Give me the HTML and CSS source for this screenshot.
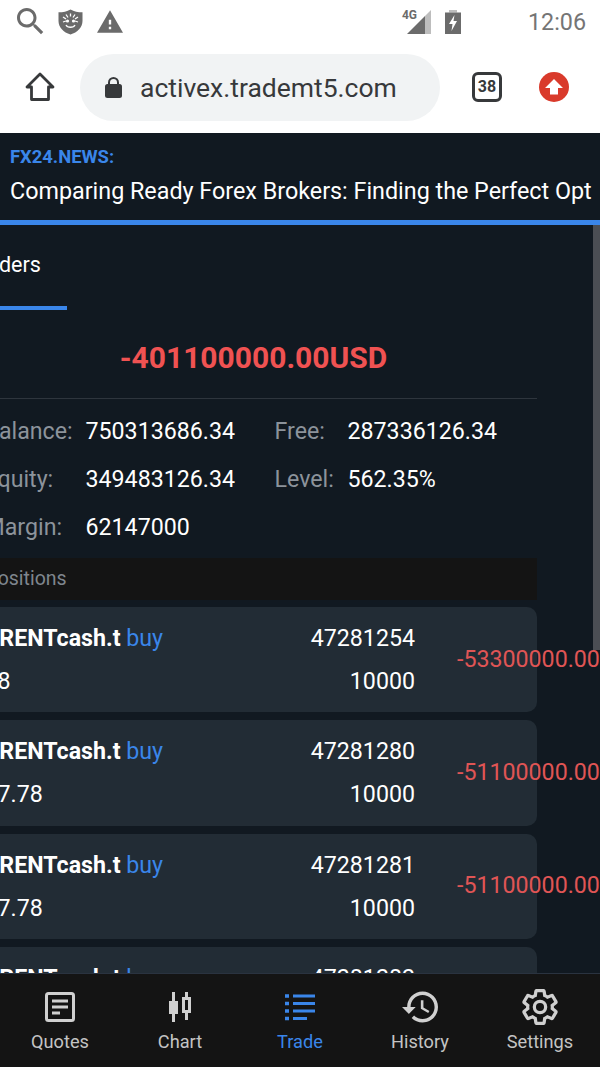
FILE: index.html
```html
<!DOCTYPE html>
<html lang="en">
<head>
  <meta charset="UTF-8" />
  <title>Trade</title>
  <link rel="stylesheet" href="styles.css">
</head>
<body>
  <div class="status-bar">
    <div class="status-left">
      <svg class="icon-search" viewBox="3 3 18 18"><path d="M15.5 14h-.79l-.28-.27C15.41 12.59 16 11.11 16 9.5 16 5.91 13.09 3 9.5 3S3 5.91 3 9.5 5.91 16 9.5 16c1.61 0 3.09-.59 4.23-1.57l.27.28v.79l5 4.99L20.49 19l-4.99-5zm-6 0C7.01 14 5 11.99 5 9.5S7.01 5 9.5 5 14 7.01 14 9.5 11.99 14 9.5 14z"/></svg>
      <svg class="icon-shield" viewBox="0 0 25 26">
        <path d="M12.5 0.5C16 2.5 20 3.3 24.5 3.3V12c0 6.5-5 11.300-12 13.500C5.500 23.300.5 18.500.5 12V3.300C5 3.300 9 2.500 12.500.5z"/>
        <path class="shield-face" d="M5 8l3 2M20 8l-3 2M8 5.500l2 3M17 5.500l-2 3M12.500 4.500v3M5 13l3-1M20 13l-3-1M8 16c1.500 3 7.500 3 9 0"/>
        <circle class="shield-eye" cx="9.500" cy="12" r="1.600"/>
        <circle class="shield-eye" cx="15.500" cy="12" r="1.600"/>
      </svg>
      <svg class="icon-warning" viewBox="1 2 22 19"><path d="M1 21h22L12 2 1 21zm12-3h-2v-2h2v2zm0-4h-2v-4h2v4z"/></svg>
    </div>
    <div class="status-right">
      <div class="signal">
        <span class="signal-label">4G</span>
        <svg class="icon-signal" viewBox="0 0 24 24"><path class="signal-empty" d="M24 0v24H18V6z"/><path d="M18 6v18H0z"/></svg>
      </div>
      <svg class="icon-battery" viewBox="0 0 16 24">
        <path class="battery-top" d="M4 0h8v2.500H4z"/>
        <path fill-rule="evenodd" d="M0 2.500h16V24H0zM9.500 5L4 14h3.500l-1 7L12 11H8.500z"/>
      </svg>
      <span class="clock">12:06</span>
    </div>
  </div>

  <div class="browser-bar">
    <svg class="icon-home" viewBox="0 0 30 30"><path d="M2 15L15 2l13 13h-4.500v12.500h-17V15z"/></svg>
    <div class="url-pill">
      <svg class="icon-lock" viewBox="0 0 17 21">
        <path class="lock-shackle" d="M4 9V5.500a4.500 4.500 0 0 1 9 0V9"/>
        <rect y="7" width="17" height="14" rx="2.500"/>
      </svg>
      <span class="url">activex.trademt5.com</span>
    </div>
    <div class="tab-count">38</div>
    <svg class="icon-update" viewBox="0 0 30 30">
      <circle cx="15" cy="15" r="15"/>
      <path d="M15 7l9 9h-5v6.500h-8V16H6z"/>
    </svg>
  </div>

  <div class="news">
    <div class="news-label">FX24.NEWS:</div>
    <div class="news-text">Comparing Ready Forex Brokers: Finding the Perfect Opt</div>
  </div>

  <main class="main">
    <div class="panel">
      <div class="tabs">
        <div class="tab">Orders</div>
      </div>
      <div class="total">-401100000.00USD</div>

      <div class="summary">
        <span class="label">Balance:</span><span>750313686.34</span><span class="label">Free:</span><span>287336126.34</span>
        <span class="label">Equity:</span><span>349483126.34</span><span class="label">Level:</span><span>562.35%</span>
        <span class="label">Margin:</span><span>62147000</span>
      </div>

      <div class="section">Positions</div>

      <div class="cards">
        <div class="card">
          <div class="card-left">
            <div><b>BRENTcash.t</b> <span class="side">buy</span></div>
            <div>78</div>
          </div>
          <div class="card-mid">
            <div>47281254</div>
            <div>10000</div>
          </div>
          <div class="pnl">-53300000.00</div>
        </div>
        <div class="card">
          <div class="card-left">
            <div><b>BRENTcash.t</b> <span class="side">buy</span></div>
            <div>77.78</div>
          </div>
          <div class="card-mid">
            <div>47281280</div>
            <div>10000</div>
          </div>
          <div class="pnl">-51100000.00</div>
        </div>
        <div class="card">
          <div class="card-left">
            <div><b>BRENTcash.t</b> <span class="side">buy</span></div>
            <div>77.78</div>
          </div>
          <div class="card-mid">
            <div>47281281</div>
            <div>10000</div>
          </div>
          <div class="pnl">-51100000.00</div>
        </div>
        <div class="card">
          <div class="card-left">
            <div><b>BRENTcash.t</b> <span class="side">buy</span></div>
            <div>77.78</div>
          </div>
          <div class="card-mid">
            <div>47281282</div>
            <div>10000</div>
          </div>
          <div class="pnl">-51100000.00</div>
        </div>
      </div>
    </div>
    <div class="scrollbar"></div>
  </main>

  <nav class="nav">
    <div class="nav-item">
      <svg viewBox="0 0 30 30"><rect x="1.500" y="1.500" width="27" height="27" rx="2"/><path d="M7 9h16M7 15h16M7 21h8"/></svg>
      <span>Quotes</span>
    </div>
    <div class="nav-item">
      <svg viewBox="0 0 30 30">
        <path class="filled" d="M4 9h3V0h3v9h3v13h-3v8H7v-8H4z"/>
        <path class="filled" fill-rule="evenodd" d="M17 5h3V0h3v5h3v16h-3v7h-3v-7h-3zM20 8v10h3V8z"/>
      </svg>
      <span>Chart</span>
    </div>
    <div class="nav-item active">
      <svg viewBox="0 0 30 30"><path class="dash" d="M0 4h4M0 11.500h4M0 19h4M0 26.500h4"/><path d="M8 4h22M8 11.500h22M8 19h22M8 26.500h14"/></svg>
      <span>Trade</span>
    </div>
    <div class="nav-item">
      <svg class="wide" viewBox="1 3 21 18"><path class="filled" d="M13 3c-4.970 0-9 4.030-9 9H1l3.890 3.890.07.14L9 12H6c0-3.870 3.130-7 7-7s7 3.130 7 7-3.130 7-7 7c-1.930 0-3.680-.79-4.940-2.060l-1.420 1.420C8.270 19.990 10.510 21 13 21c4.970 0 9-4.030 9-9s-4.030-9-9-9zm-1 5v5l4.280 2.540.72-1.210-3.500-2.080V8H12z"/></svg>
      <span>History</span>
    </div>
    <div class="nav-item">
      <svg class="wide" viewBox="2 1.500 20 21"><path class="thin" d="M19.140 12.940c.04-.3.06-.61.06-.94 0-.32-.02-.64-.07-.94l2.030-1.580c.18-.14.23-.41.12-.61l-1.920-3.320c-.12-.22-.37-.29-.59-.22l-2.390.96c-.5-.38-1.030-.7-1.620-.94l-.36-2.540c-.04-.24-.24-.41-.48-.41h-3.840c-.24 0-.43.17-.47.41l-.36 2.540c-.59.24-1.130.57-1.620.94l-2.390-.96c-.22-.08-.47 0-.59.22L2.740 8.870c-.12.21-.08.47.12.61l2.030 1.580c-.05.3-.09.63-.09.94s.02.64.07.94l-2.030 1.580c-.18.14-.23.41-.12.61l1.920 3.320c.12.22.37.29.59.22l2.390-.96c.5.38 1.030.7 1.620.94l.36 2.540c.05.24.24.41.48.41h3.840c.24 0 .44-.17.47-.41l.36-2.540c.59-.24 1.130-.56 1.620-.94l2.390.96c.22.08.47 0 .59-.22l1.920-3.320c.12-.22.07-.47-.12-.61l-2.010-1.580z"/><circle class="thin" cx="12" cy="12" r="3.300"/></svg>
      <span>Settings</span>
    </div>
  </nav>
</body>
</html>
```

FILE: styles.css
```css
:root {
  --bg: #111921;
  --card: #222c35;
  --bar: #141414;
  --blue: #3a86ea;
  --red: #e05555;
  --label: #8c939b;
  --nav-text: #c4c4c4;
  --status: #6b6b6b;
}

html, body {
  margin: 0;
  padding: 0;
  height: 100%;
}

body {
  display: flex;
  flex-direction: column;
  width: 600px;
  height: 1067px;
  overflow: hidden;
  background: var(--bg);
  color: #fff;
  font-family: Roboto, sans-serif;
  font-size: 23.200px;
}

/* status bar */
.status-bar {
  display: flex;
  flex: none;
  align-items: center;
  justify-content: space-between;
  height: 43px;
  background: #fff;
}

.status-left {
  display: flex;
  align-items: center;
  padding-left: 17px;
  fill: var(--status);
}

.icon-search {
  width: 27px;
  height: 27px;
}

.icon-shield {
  width: 25px;
  height: 26px;
  margin-left: 14px;
}

.shield-face {
  fill: none;
  stroke: #fff;
  stroke-width: 1.3;
}

.shield-eye {
  fill: #fff;
}

.icon-warning {
  width: 26px;
  height: 23px;
  margin-left: 14px;
}

.status-right {
  display: flex;
  align-items: center;
  padding-right: 14px;
  fill: var(--status);
}

.signal {
  position: relative;
  width: 24px;
  height: 24px;
}

.signal-label {
  position: absolute;
  top: -2px;
  left: -5px;
  font-size: 12px;
  font-weight: 700;
  color: var(--status);
}

.icon-signal {
  display: block;
  width: 24px;
  height: 24px;
}

.signal-empty {
  fill: #bdbdbd;
}

.icon-battery {
  width: 16px;
  height: 24px;
  margin-left: 14px;
}

.battery-top {
  fill: #bdbdbd;
}

.clock {
  margin-left: 67px;
  font-size: 23.300px;
  color: #757575;
}

/* browser toolbar */
.browser-bar {
  display: flex;
  flex: none;
  box-sizing: border-box;
  align-items: center;
  height: 90px;
  padding: 0 0 2px 25px;
  background: #fff;
  color: #37393b;
}

.icon-home {
  flex: none;
  width: 30px;
  height: 30px;
  fill: none;
  stroke: #37393b;
  stroke-width: 2.800;
  stroke-linejoin: round;
}

.url-pill {
  display: flex;
  align-items: center;
  flex: none;
  width: 335px;
  height: 67px;
  margin-left: 25px;
  padding-left: 25px;
  border-radius: 34px;
  background: #f1f3f4;
}

.icon-lock {
  flex: none;
  width: 17px;
  height: 21px;
  fill: #37393b;
}

.lock-shackle {
  fill: none;
  stroke: #37393b;
  stroke-width: 2;
}

.url {
  margin-left: 18px;
  font-size: 26.500px;
}

.tab-count {
  flex: none;
  width: 24px;
  height: 24px;
  margin-left: 32px;
  border: 3px solid #37393b;
  border-radius: 6px;
  font-size: 16px;
  font-weight: 700;
  line-height: 24px;
  text-align: center;
}

.icon-update {
  flex: none;
  width: 30px;
  height: 30px;
  margin-left: 37px;
  fill: #d93a2b;
}

.icon-update path {
  fill: #fff;
}

/* news strip */
.news {
  flex: none;
  box-sizing: border-box;
  height: 92px;
  padding: 13px 0 0 10px;
  border-bottom: 5px solid var(--blue);
  overflow: hidden;
}

.news-label {
  color: var(--blue);
  font-size: 18.400px;
  font-weight: 700;
  line-height: 22px;
}

.news-text {
  margin-top: 9px;
  font-size: 23.320px;
  line-height: 28px;
  white-space: nowrap;
}

/* main area, scrolled sideways so the left edge is cut */
.main {
  position: relative;
  flex: 1;
  min-height: 0;
  overflow: hidden;
}

.scrollbar {
  position: absolute;
  top: 0;
  right: 0;
  width: 7px;
  height: 425px;
  background: #4b4e54;
}

.panel {
  width: 567px;
  margin-left: -30px;
}

.tabs {
  display: flex;
  height: 85px;
}

.tab {
  box-sizing: border-box;
  width: 97px;
  padding: 26px 0 0 7px;
  border-bottom: 4px solid var(--blue);
  font-size: 21.500px;
  line-height: 28px;
}

.total {
  box-sizing: border-box;
  height: 89px;
  border-bottom: 1px solid #2e353d;
  color: #f05252;
  font-size: 30px;
  font-weight: 700;
  line-height: 96px;
  text-align: center;
}

.summary {
  display: grid;
  grid-template-columns: 101px 189px 73px auto;
  grid-auto-rows: 48px;
  align-items: center;
  padding: 8px 0 0 14.500px;
}

.label {
  color: var(--label);
}

.section {
  height: 42px;
  margin-top: 7px;
  padding-left: 15.500px;
  background: var(--bar);
  color: #7f868e;
  font-size: 19.500px;
  line-height: 42px;
}

.cards {
  display: flex;
  flex-direction: column;
  gap: 8px;
  margin-top: 7px;
}

.card {
  display: grid;
  grid-template-columns: 1fr auto 80px;
  align-items: center;
  height: 105.300px;
  padding-left: 14.500px;
  border-radius: 10px;
  background: var(--card);
}

.card-left,
.card-mid {
  display: flex;
  flex-direction: column;
  gap: 15px;
  line-height: 28px;
}

.card-left b {
  font-weight: 700;
}

.card-mid {
  margin-right: 42px;
  text-align: right;
}

.side {
  color: var(--blue);
}

.pnl {
  margin-bottom: 2px;
  color: var(--red);
  white-space: nowrap;
}

/* bottom navigation */
.nav {
  display: flex;
  flex: none;
  box-sizing: border-box;
  height: 94px;
  border-top: 1px solid #2a3340;
  background: var(--bar);
  position: relative;
}

.nav-item {
  display: flex;
  flex: 1;
  flex-direction: column;
  align-items: center;
  padding-top: 18px;
  color: var(--nav-text);
  font-size: 18.200px;
}

.nav-item svg {
  width: 30px;
  height: 30px;
  margin-bottom: 9px;
  fill: none;
  stroke: #d0d0d0;
  stroke-width: 3;
}

.nav-item .filled {
  fill: #d0d0d0;
  stroke: none;
}

.nav-item .thin {
  stroke-width: 1.900;
}

.nav-item .wide {
  width: 36px;
  height: 36px;
  margin-top: -3px;
  margin-bottom: 6px;
}

.nav-item.active {
  color: var(--blue);
}

.nav-item.active svg {
  stroke: var(--blue);
}

.nav-item .dash {
  stroke-width: 3.500;
}
```
